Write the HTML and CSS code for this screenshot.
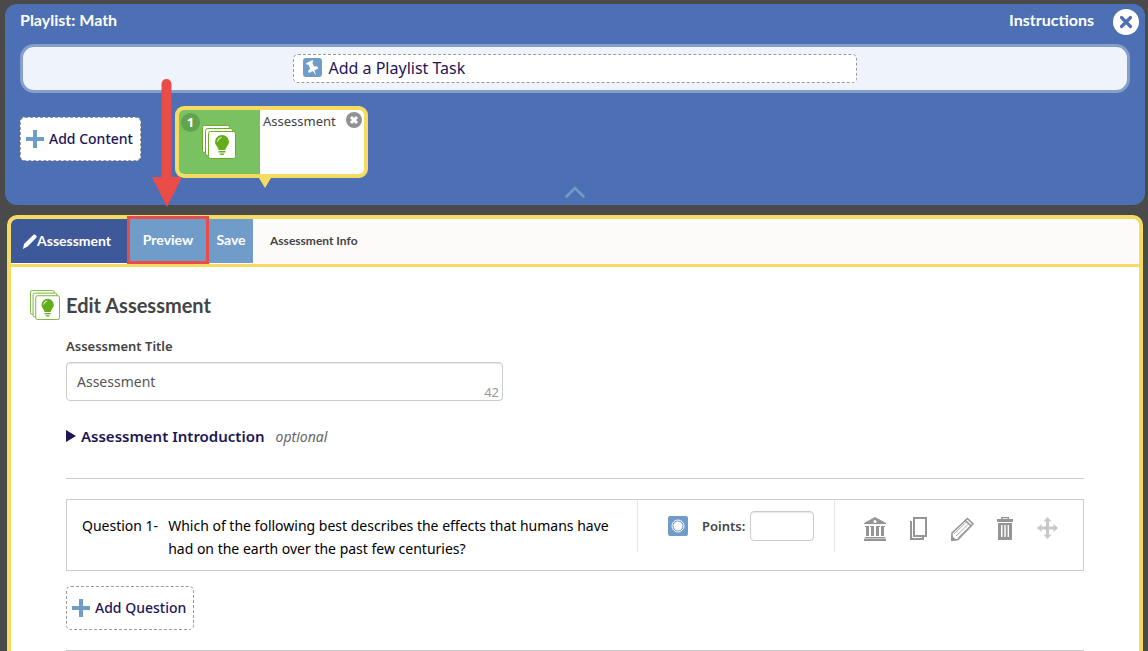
FILE: index.html
```html
<!DOCTYPE html>
<html lang="en">
<head>
    <meta charset="UTF-8">
    <meta name="viewport" content="width=device-width, initial-scale=1.0">
    <title>Playlist: Math</title>
    <link rel="stylesheet" href="styles.css">
</head>
<body>

    <!-- Icon used on the card and in the heading -->
    <svg class="sprite" aria-hidden="true">
        <symbol id="cards" viewBox="0 0 34 34">
            <rect x="0.5" y="0.5" width="27" height="27" rx="2" />
            <rect x="3.5" y="3.5" width="27" height="27" rx="2" />
            <rect x="6.5" y="6.5" width="27" height="27" rx="2" />
            <path class="bulb" d="M20 10a7 7 0 0 0-7 7c0 3 3 4.500 3.500 8h7c.5-3.500 3.500-5 3.500-8a7 7 0 0 0-7-7zM16.500 26h7v1.500h-7zM17.500 28.500h5l-1 1.500h-3z" />
            <path class="shine" d="M15.500 16.500a4.500 4.500 0 0 1 4-4" />
        </symbol>
    </svg>

    <header class="playlist">
        <div class="playlist-top">
            <h1>Playlist: Math</h1>
            <div class="top-links">
                <a href="#">Instructions</a>
                <button class="close-button" aria-label="Close">
                    <svg width="26" height="26" viewBox="0 0 26 26"><circle cx="13" cy="13" r="13" fill="#fff" /><path d="M8.500 8.500l9 9m0-9l-9 9" stroke="#4d70b5" stroke-width="3.200" stroke-linecap="round" /></svg>
                </button>
            </div>
        </div>

        <div class="task-bar">
            <button class="task-button dashed">
                <svg width="19" height="19" viewBox="0 0 19 19"><rect width="19" height="19" rx="3" fill="#709cca" /><path d="M3 5.200L9.500 2l.8 1.600-1 1.200 1.700 3.700 3-.3 1.300 2.200-3.800 1.800 1.500 5-3.300-4.200-3.700 1.900-.9-1.800 1.900-2.300-1.500-4.300-1.700.3z" fill="#fff" /></svg>
                <span>Add a Playlist Task</span>
            </button>
        </div>

        <div class="items">
            <button class="add-button dashed">
                <svg width="18" height="18" viewBox="0 0 18 18"><path d="M7 0h4v7h7v4h-7v7H7v-7H0V7h7z" fill="#709cca" /></svg>
                <span>Add Content</span>
            </button>
            <div class="card">
                <div class="card-icon">
                    <span class="number">1</span>
                    <svg class="cards" width="34" height="34"><use href="#cards" /></svg>
                </div>
                <div class="card-text">
                    <span>Assessment</span>
                    <button class="remove-button" aria-label="Remove">
                        <svg width="16" height="16" viewBox="0 0 16 16"><circle cx="8" cy="8" r="8" fill="#929292" /><path d="M5 5l6 6m0-6l-6 6" stroke="#fff" stroke-width="3" /></svg>
                    </button>
                </div>
            </div>
        </div>

        <button class="collapse-button" aria-label="Collapse">
            <svg width="20" height="12" viewBox="0 0 20 12"><path d="M1.500 10.500L10 2l8.500 8.500" fill="none" stroke="#709cca" stroke-width="2.500" stroke-linecap="round" /></svg>
        </button>

        <svg class="arrow" width="34" height="132" viewBox="0 0 34 132"><path d="M11.500 6a5 5 0 0 1 10 0v93H32L17 129 2 99h9.500z" fill="#ea4d47" /></svg>
    </header>

    <main class="editor">
        <nav class="tabs">
            <a href="#" class="tab active">
                <svg width="14" height="15" viewBox="0 0 14 15"><path d="M0 15l1-5L10.500.8c1-1.200 4 1.200 3 2.700L4.500 12.500z" fill="#fff" /></svg>Assessment</a>
            <a href="#" class="tab preview">Preview</a>
            <a href="#" class="tab save">Save</a>
            <a href="#" class="tab-info">Assessment Info</a>
        </nav>

        <div class="heading">
            <svg class="cards" width="30" height="30"><use href="#cards" /></svg>
            <h2>Edit Assessment</h2>
        </div>

        <div class="content">
            <label class="title-label" for="title">Assessment Title</label>
            <div class="title-field">
                <input type="text" id="title" value="Assessment">
                <span class="count">42</span>
            </div>

            <details class="intro">
                <summary>
                    <svg width="10" height="12" viewBox="0 0 10 12"><path d="M0 0l10 6-10 6z" fill="#1e1557" /></svg>
                    <strong>Assessment Introduction</strong>
                    <em>optional</em>
                </summary>
            </details>

            <section class="question">
                <div class="question-text">
                    <span>Question 1-</span>
                    <p>Which of the following best describes the effects that humans have had on the earth over the past few centuries?</p>
                </div>
                <div class="points">
                    <svg width="20" height="20" viewBox="0 0 20 20"><rect width="20" height="20" rx="2" fill="#709cca" /><circle cx="10" cy="10" r="6" fill="none" stroke="#fff" /><circle cx="10" cy="10" r="4.500" fill="#fff" /></svg>
                    <label for="points">Points:</label>
                    <input type="text" id="points">
                </div>
                <div class="actions">
                    <button aria-label="Question bank">
                        <svg width="22" height="24" viewBox="0 0 22 24"><path fill-rule="evenodd" d="M11 0l11 6v1H0V6zM11 3a1.500 1.500 0 1 0 0 3 1.500 1.500 0 0 0 0-3zM1 9h4v10H2v-9H1zM6 9h4v10H7v-9H6zM12 9h4v1h-1v9h-3zM17 9h4v1h-1v9h-3zM1 20h20v1H1zM0 21.500h22V24H0z" /></svg>
                    </button>
                    <button aria-label="Copy">
                        <svg width="17" height="24" viewBox="0 0 17 24"><path fill-rule="evenodd" d="M3 0h14v20H3zM5 2v16h10V2zM0 4h2v17h10v-1h2v3H0z" /></svg>
                    </button>
                    <button aria-label="Edit">
                        <svg width="23" height="24" viewBox="0 0 23 24"><path d="M1 16L16.500 1.500l5.500 5.500L7 22.500l-6 .5z" fill="none" stroke="#959595" stroke-width="1.600" /><path d="M3 17L16 4.500M5 19L18 6.500M7 21L20 8.500" stroke="#959595" stroke-width="0.800" /><path d="M14 3l6 6" stroke="#959595" stroke-width="1.500" /><path d="M0 18l6 5.500-6 .5z" /></svg>
                    </button>
                    <button aria-label="Delete">
                        <svg width="16" height="24" viewBox="0 0 16 24"><path fill-rule="evenodd" d="M4 0h8v2h4v3H0V2h4zM5.500 1.300V2h5v-.7zM1 6h14v17H1zM4 8v12h1.500V8zM7.300 8v12h1.500V8zM10.600 8v12H12V8z" /></svg>
                    </button>
                    <button aria-label="Move" class="move">
                        <svg width="21" height="24" viewBox="0 0 21 24"><path d="M10.500 0l4 4.500H12v5h4.500V7l4.500 4-4.500 4v-2.500H12v5h2.500l-4 4.500-4-4.500H9v-5H4.500V15L0 11l4.500-4v2.500H9v-5H6.500z" /></svg>
                    </button>
                </div>
            </section>

            <button class="add-button dashed">
                <svg width="18" height="18" viewBox="0 0 18 18"><path d="M7 0h4v7h7v4h-7v7H7v-7H0V7h7z" fill="#709cca" /></svg>
                <span>Add Question</span>
            </button>
            <hr>
        </div>
    </main>

</body>
</html>
```

FILE: styles.css
```css
* { box-sizing: border-box; }
body { display: flex; flex-direction: column; min-height: 100vh; margin: 0; padding: 4px 3px 0 5px; background-color: #4a4a4a; color: #444; font-family: "Noto Sans", sans-serif; font-size: 13px; }
h1, h2, p { margin: 0; }
a { color: inherit; text-decoration: none; }
button { padding: 0; border: none; background: none; font-family: inherit; cursor: pointer; }
input { border: 1px solid #ccc; border-radius: 4px; box-shadow: inset 0 1px 1px #e8e8e8; font-family: inherit; color: #555; }
svg { display: block; flex-shrink: 0; }
.sprite { position: absolute; width: 0; height: 0; }
.cards { fill: #fff; stroke: #6aae20; }
.bulb { fill: #64ac18; stroke: none; }
.shine { fill: none; stroke: #fff; }
.dashed { border: 1px dashed #999; border-radius: 5px; background-color: #fff; color: #1e1557; }

/* Playlist panel */
.playlist { position: relative; display: flex; flex-direction: column; height: 201px; padding: 0 15px; border-radius: 12px; background-color: #4d70b5; }
.playlist-top { display: flex; justify-content: space-between; height: 40px; color: #fff; }
.playlist-top h1, .top-links a { font-family: Lato, sans-serif; font-size: 16px; font-weight: 700; line-height: 32px; }
.top-links { display: flex; align-items: flex-start; gap: 19px; margin-right: -9px; }
.close-button { margin-top: 5px; }
.task-bar { display: flex; justify-content: center; align-items: center; height: 49px; border: 3px solid #849fca; border-radius: 14px; background-color: #eff3fb; }
.task-button { display: flex; align-items: center; gap: 6px; width: 51%; height: 29px; padding: 0 9px 2px; font-size: 16px; }
.items { display: flex; align-items: flex-start; gap: 34px; padding-top: 13px; }
.items .add-button { margin-top: 11px; }
.add-button { display: flex; align-items: center; gap: 5px; height: 44px; padding: 0 7px 0 5px; font-size: 14px; font-weight: 500; }
.add-button span { padding-bottom: 2px; }
.card { position: relative; display: flex; width: 193px; height: 72px; border: 4px solid #f6db62; border-radius: 9px; background-color: #fff; }
.card::after { content: ""; position: absolute; top: 68px; left: 80px; border: 6px solid transparent; border-top: 10px solid #f6db62; border-bottom: none; }
.card-icon { display: flex; gap: 2px; width: 81px; padding: 3px 2px; border-radius: 5px 0 0 5px; background-color: #7ac162; }
.card-icon .cards { margin-top: 12px; }
.number { width: 19px; height: 19px; border-radius: 50%; background-color: #61a34e; color: #fff; font-weight: 700; line-height: 19px; text-align: center; }
.card-text { display: flex; flex: 1; justify-content: space-between; align-items: flex-start; padding: 2px 2px 0 3px; line-height: 18px; }
.collapse-button { position: absolute; bottom: 7px; left: 50%; margin-left: -10px; }
.arrow { position: absolute; top: 74px; left: 145px; }

/* Editor panel */
.editor { flex: 1; margin: 10px 2px 0; border: 4px solid #f6db62; border-bottom: none; border-radius: 10px 10px 0 0; background-color: #fff; }
.tabs { display: flex; height: 48px; border-bottom: 3px solid #f6db62; border-radius: 6px 6px 0 0; background-color: #fcfbf9; font-family: Lato, sans-serif; line-height: 44px; }
.tab { height: 44px; background-color: #709cca; color: #fff; font-size: 14px; font-weight: 700; line-height: 42px; text-align: center; }
.active { display: flex; align-items: center; width: 116px; padding-left: 12px; border-radius: 6px 0 0 0; background-color: #3d5999; }
.preview { width: 82px; height: 48px; margin-top: -3px; border: 3px solid #ea4d47; }
.save { width: 44px; }
.tab-info { margin-left: 17px; font-size: 12px; font-weight: 700; }
.heading { display: flex; align-items: center; gap: 6px; padding: 23px 0 0 19px; }
.heading h2 { font-family: Lato, sans-serif; font-size: 20px; font-weight: 700; line-height: 30px; }
.content { margin: 0 55px; }
.title-label { display: block; margin-top: 16px; font-size: 13px; font-weight: 600; line-height: 20px; }
.title-field { position: relative; width: 437px; margin-top: 6px; }
.title-field input { display: block; width: 100%; height: 39px; padding: 0 10px; font-size: 14px; }
.count { position: absolute; right: 4px; bottom: 0; color: #999; line-height: 18px; }
.intro { padding: 23px 0 30px; border-bottom: 1px solid #ccc; }
.intro summary { display: flex; align-items: center; height: 24px; list-style: none; cursor: pointer; }
.intro strong { margin: 0 11px 0 5px; color: #1e1557; font-size: 15px; font-weight: 600; }
.intro em { color: #666; font-size: 14px; }
.question { display: flex; height: 72px; margin-top: 20px; border: 1px solid #ccc; }
.question-text { display: flex; flex: 1; gap: 10px; padding: 14px 20px 0 15px; color: #000; font-size: 14px; line-height: 23px; }
.question-text span { flex-shrink: 0; }
.points { display: flex; align-items: center; width: 197px; height: 52px; padding-left: 30px; border-left: 1px solid #e5e5e5; }
.points label { margin: 0 5px 0 14px; font-size: 13px; font-weight: 600; }
.points input { width: 64px; height: 30px; }
.actions { display: flex; justify-content: space-between; align-items: center; width: 249px; height: 52px; padding: 5px 25px 0 29px; border-left: 1px solid #e5e5e5; fill: #959595; }
.move { fill: #c8c8c8; }
.content .add-button { margin-top: 15px; }
hr { margin: 20px 0 0; border: none; border-top: 1px solid #ccc; }
```
